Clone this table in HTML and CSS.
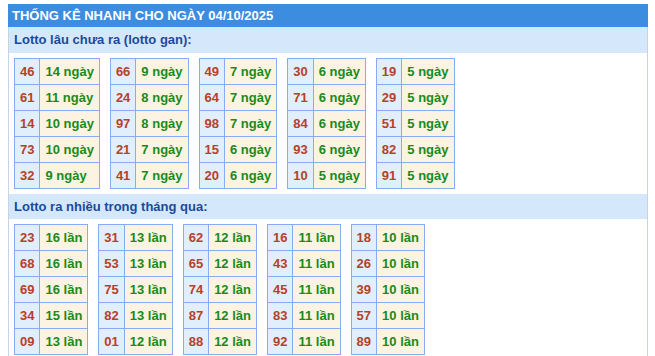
FILE: index.html
```html
<!DOCTYPE html>
<html lang="vi">
<head>
<meta charset="utf-8">
<title>Thống kê nhanh</title>
<link rel="stylesheet" href="styles.css">
</head>
<body>
<div class="box">
  <div class="title">THỐNG KÊ NHANH CHO NGÀY 04/10/2025</div>
  <div class="inner">
    <div class="sub">Lotto lâu chưa ra (lotto gan):</div>
    <div class="tables">
      <table class="t"><tr><td class="n">46</td><td class="v">14 ngày</td></tr><tr><td class="n">61</td><td class="v">11 ngày</td></tr><tr><td class="n">14</td><td class="v">10 ngày</td></tr><tr><td class="n">73</td><td class="v">10 ngày</td></tr><tr><td class="n">32</td><td class="v">9 ngày</td></tr></table>
      <table class="t"><tr><td class="n">66</td><td class="v">9 ngày</td></tr><tr><td class="n">24</td><td class="v">8 ngày</td></tr><tr><td class="n">97</td><td class="v">8 ngày</td></tr><tr><td class="n">21</td><td class="v">7 ngày</td></tr><tr><td class="n">41</td><td class="v">7 ngày</td></tr></table>
      <table class="t"><tr><td class="n">49</td><td class="v">7 ngày</td></tr><tr><td class="n">64</td><td class="v">7 ngày</td></tr><tr><td class="n">98</td><td class="v">7 ngày</td></tr><tr><td class="n">15</td><td class="v">6 ngày</td></tr><tr><td class="n">20</td><td class="v">6 ngày</td></tr></table>
      <table class="t"><tr><td class="n">30</td><td class="v">6 ngày</td></tr><tr><td class="n">71</td><td class="v">6 ngày</td></tr><tr><td class="n">84</td><td class="v">6 ngày</td></tr><tr><td class="n">93</td><td class="v">6 ngày</td></tr><tr><td class="n">10</td><td class="v">5 ngày</td></tr></table>
      <table class="t"><tr><td class="n">19</td><td class="v">5 ngày</td></tr><tr><td class="n">29</td><td class="v">5 ngày</td></tr><tr><td class="n">51</td><td class="v">5 ngày</td></tr><tr><td class="n">82</td><td class="v">5 ngày</td></tr><tr><td class="n">91</td><td class="v">5 ngày</td></tr></table>
    </div>
    <div class="sub sub-2">Lotto ra nhiều trong tháng qua:</div>
    <div class="tables">
      <table class="t"><tr><td class="n">23</td><td class="v">16 lần</td></tr><tr><td class="n">68</td><td class="v">16 lần</td></tr><tr><td class="n">69</td><td class="v">16 lần</td></tr><tr><td class="n">34</td><td class="v">15 lần</td></tr><tr><td class="n">09</td><td class="v">13 lần</td></tr></table>
      <table class="t"><tr><td class="n">31</td><td class="v">13 lần</td></tr><tr><td class="n">53</td><td class="v">13 lần</td></tr><tr><td class="n">75</td><td class="v">13 lần</td></tr><tr><td class="n">82</td><td class="v">13 lần</td></tr><tr><td class="n">01</td><td class="v">12 lần</td></tr></table>
      <table class="t"><tr><td class="n">62</td><td class="v">12 lần</td></tr><tr><td class="n">65</td><td class="v">12 lần</td></tr><tr><td class="n">74</td><td class="v">12 lần</td></tr><tr><td class="n">87</td><td class="v">12 lần</td></tr><tr><td class="n">88</td><td class="v">12 lần</td></tr></table>
      <table class="t"><tr><td class="n">16</td><td class="v">11 lần</td></tr><tr><td class="n">43</td><td class="v">11 lần</td></tr><tr><td class="n">45</td><td class="v">11 lần</td></tr><tr><td class="n">83</td><td class="v">11 lần</td></tr><tr><td class="n">92</td><td class="v">11 lần</td></tr></table>
      <table class="t"><tr><td class="n">18</td><td class="v">10 lần</td></tr><tr><td class="n">26</td><td class="v">10 lần</td></tr><tr><td class="n">39</td><td class="v">10 lần</td></tr><tr><td class="n">57</td><td class="v">10 lần</td></tr><tr><td class="n">89</td><td class="v">10 lần</td></tr></table>
    </div>
  </div>
</div>
</body>
</html>
```
FILE: styles.css
```css
html, body {
  margin: 0;
  padding: 0;
  background: #ffffff;
}
body {
  font-family: "Liberation Sans", Arial, sans-serif;
  font-size: 13px;
  font-weight: bold;
}
.box {
  margin: 4px 7px 0 8px;
  width: 640px;
}
.title {
  background: #3c8ddf;
  color: #ffffff;
  height: 23px;
  line-height: 23px;
  padding-left: 4px;
}
.inner {
  border-left: 1px solid #c6d3e2;
  border-right: 1px solid #c6d3e2;
  padding-bottom: 4px;
}
.sub {
  background: #d5e8fb;
  color: #1b4a9c;
  height: 26px;
  line-height: 26px;
  padding-left: 5px;
}
.sub-2 {
  height: 25px;
  line-height: 25px;
}
.tables {
  display: flex;
  gap: 10px;
  padding: 5px 5px;
  align-items: flex-start;
}
.t {
  border-collapse: collapse;
}
.t td {
  border: 1px solid #88acf4;
  padding: 5px 5px;
  line-height: 15px;
  white-space: nowrap;
}
.t td.n {
  background: #e1eefc;
  color: #b5412a;
  text-align: center;
}
.t td.v {
  background: #fdf3e2;
  color: #1a8a1a;
  text-align: left;
}
```
